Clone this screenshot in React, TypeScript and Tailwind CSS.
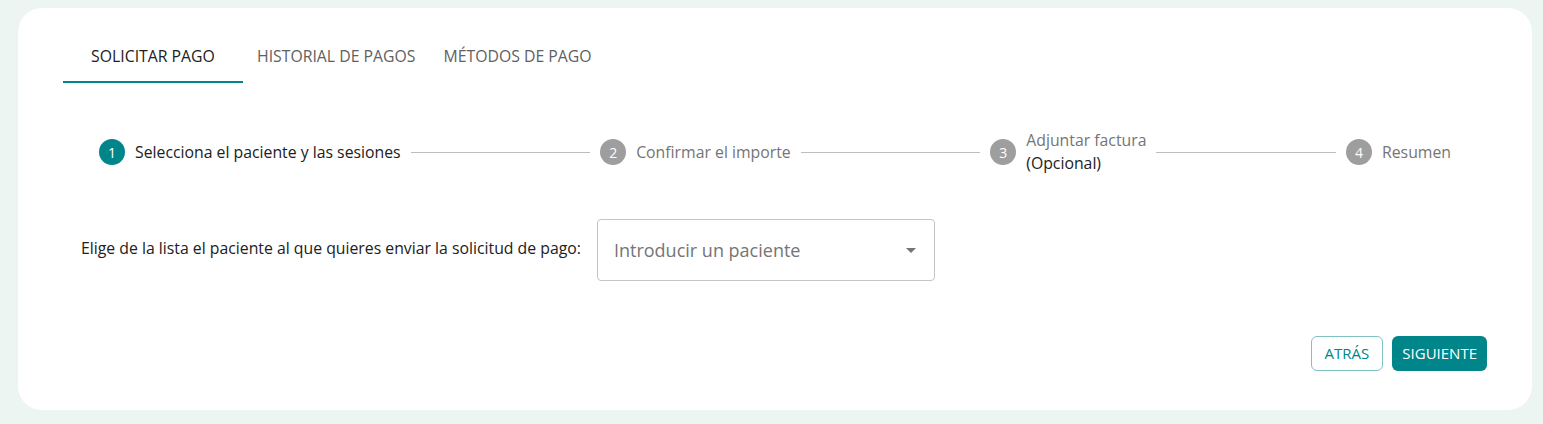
import { Fragment } from 'react';

const steps = [
  { n: 1, label: 'Selecciona el paciente y las sesiones', active: true },
  { n: 2, label: 'Confirmar el importe' },
  { n: 3, label: 'Adjuntar factura', optional: '(Opcional)' },
  { n: 4, label: 'Resumen' },
];

const App = () => {
  return (
    <div
      className="min-h-[424px] bg-[#edf5f2] pt-2 pb-[14px] pl-[18px] pr-[11px]"
      style={{ fontFamily: '"Open Sans", "Noto Sans", sans-serif' }}
    >
      <div className="h-[402px] rounded-[24px] bg-white px-[45px] pt-[36px]">
        {/* tabs */}
        <div className="flex">
          <div className="w-[180px] border-b-2 border-[#00868a] pb-[13px] text-center text-[15.8px] leading-[24px] text-[#212121]">
            SOLICITAR PAGO
          </div>
          <div className="px-[14px] text-[15.8px] leading-[24px] text-[#616161]">HISTORIAL DE PAGOS</div>
          <div className="px-[14px] text-[15.8px] leading-[24px] text-[#616161]">MÉTODOS DE PAGO</div>
        </div>

        {/* stepper */}
        <div className="mt-[46px] flex items-center pl-[36px] pr-[36px]">
          {steps.map((s, i) => (
            <Fragment key={s.n}>
              <div className="flex items-center">
                <div
                  className={`flex h-[26px] w-[26px] shrink-0 items-center justify-center rounded-full text-[14px] text-white ${
                    s.active ? 'bg-[#00868a]' : 'bg-[#9e9e9e]'
                  }`}
                >
                  {s.n}
                </div>
                <div className="ml-[10px] text-[15.8px] leading-[23px] whitespace-nowrap">
                  <div className={s.active ? 'text-[#212121]' : 'text-[#757575]'}>{s.label}</div>
                  {s.optional && <div className="text-[#212121]">{s.optional}</div>}
                </div>
              </div>
              {i < steps.length - 1 && <div className="mx-[10px] h-px flex-1 bg-[#bdbdbd]" />}
            </Fragment>
          ))}
        </div>

        {/* patient select */}
        <div className="mt-[44px] flex items-center pl-[18px]">
          <div className="mt-[-3px] text-[15.8px] text-[#212121]">
            Elige de la lista el paciente al que quieres enviar la solicitud de pago:
          </div>
          <div className="ml-[16px] flex h-[62px] w-[338px] items-center justify-between rounded border border-[#c4c4c4] pl-[16px] pr-[18px]">
            <span className="text-[18px] text-[#757575]">Introducir un paciente</span>
            <svg width="10" height="5" viewBox="0 0 10 5">
              <path d="M0 0 L10 0 L5 5 Z" fill="#757575" />
            </svg>
          </div>
        </div>

        {/* actions */}
        <div className="mt-[55px] flex justify-end gap-[9px]">
          <button className="h-[35px] rounded-[6px] border border-[#80c2c4] px-[13px] text-[15px] font-medium text-[#00868a]">
            ATRÁS
          </button>
          <button className="h-[35px] rounded-[6px] bg-[#00868a] px-[10px] text-[15px] font-medium text-white">
            SIGUIENTE
          </button>
        </div>
      </div>
    </div>
  );
};

export default App;
